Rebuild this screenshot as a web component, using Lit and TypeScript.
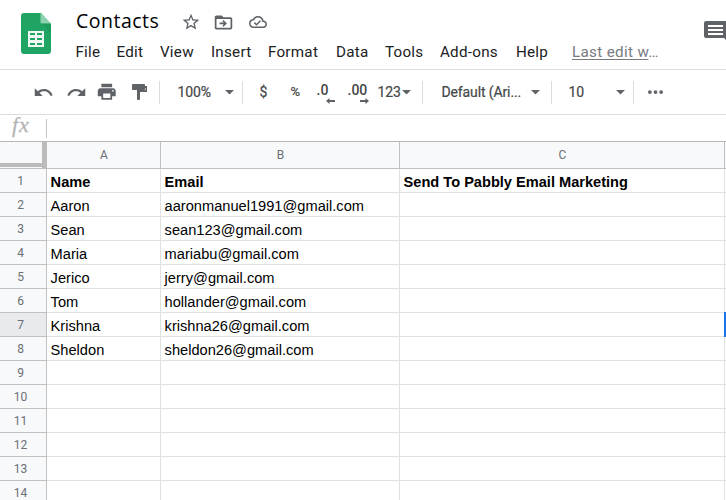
import { LitElement, html, css, svg } from "lit";
import { customElement } from "lit/decorators.js";

const menus = ["File", "Edit", "View", "Insert", "Format", "Data", "Tools", "Add-ons", "Help"];

const rows: string[][] = [
  ["Name", "Email", "Send To Pabbly Email Marketing"],
  ["Aaron", "aaronmanuel1991@gmail.com", ""],
  ["Sean", "sean123@gmail.com", ""],
  ["Maria", "mariabu@gmail.com", ""],
  ["Jerico", "jerry@gmail.com", ""],
  ["Tom", "hollander@gmail.com", ""],
  ["Krishna", "krishna26@gmail.com", ""],
  ["Sheldon", "sheldon26@gmail.com", ""],
  ...Array.from({ length: 6 }, () => ["", "", ""]),
];

const glyphs = {
  star: svg`<path d="M22 9.24l-7.19-.62L12 2 9.19 8.63 2 9.24l5.46 4.73L5.82 21 12 17.27 18.18 21l-1.63-7.03L22 9.24zM12 15.4l-3.76 2.27 1-4.28-3.32-2.88 4.38-.38L12 6.1l1.71 4.04 4.38.38-3.32 2.88 1 4.28L12 15.4z"/>`,
  move: svg`<path d="M20 6h-8l-2-2H4c-1.1 0-2 .9-2 2v12c0 1.1.9 2 2 2h16c1.1 0 2-.9 2-2V8c0-1.1-.9-2-2-2zm0 12H4V8h16v10zM12 9.2l-1.3 1.3 1.6 1.6H7.5v1.9h4.8l-1.6 1.6L12 16.9l3.9-3.85z"/>`,
  cloud: svg`<path d="M19.35 10.04A7.49 7.49 0 0 0 12 4C9.11 4 6.6 5.64 5.35 8.04A5.994 5.994 0 0 0 0 14c0 3.31 2.69 6 6 6h13c2.76 0 5-2.24 5-5 0-2.64-2.05-4.78-4.65-4.96zM19 18H6c-2.21 0-4-1.79-4-4 0-2.05 1.53-3.76 3.56-3.97l1.07-.11.5-.95A5.469 5.469 0 0 1 12 6c2.62 0 4.88 1.86 5.39 4.43l.3 1.5 1.53.11A2.98 2.98 0 0 1 22 15c0 1.65-1.35 3-3 3zm-9-3.82l-2.09-2.09L6.5 13.5 10 17l6.01-6.01-1.41-1.41z"/>`,
  undo: svg`<path d="M12.5 8c-2.65 0-5.05.99-6.9 2.6L2 7v9h9l-3.62-3.62c1.39-1.16 3.16-1.88 5.12-1.88 3.54 0 6.55 2.31 7.6 5.5l2.37-.78C21.08 11.03 17.15 8 12.5 8z"/>`,
  redo: svg`<path d="M18.4 10.6C16.55 8.99 14.15 8 11.5 8c-4.65 0-8.58 3.03-9.96 7.22L3.9 16c1.05-3.19 4.05-5.5 7.6-5.5 1.95 0 3.73.72 5.12 1.88L13 16h9V7l-3.6 3.6z"/>`,
  print: svg`<path d="M19 8H5c-1.66 0-3 1.34-3 3v6h4v4h12v-4h4v-6c0-1.66-1.34-3-3-3zm-3 11H8v-5h8v5zm3-7c-.55 0-1-.45-1-1s.45-1 1-1 1 .45 1 1-.45 1-1 1zm-1-9H6v4h12V3z"/>`,
};

const icon = (shape: unknown, cls: string) =>
  html`<svg class="icon ${cls}" viewBox="0 0 24 24" aria-hidden="true">${shape}</svg>`;

const arrow = html`<svg class="arrow" viewBox="0 0 10 5"><path d="M0 0h10L5 5z"/></svg>`;

@customElement("sheet-header")
class SheetHeader extends LitElement {
  static styles = css`
    :host { display: flex; height: 69px; border-bottom: 1px solid #dadce0; background: #fff; color: #202124; font-family: Roboto, sans-serif; }
    .logo { width: 30px; height: 41px; margin: 13px 0 0 21px; flex: none; }
    .main { margin-left: 25px; flex: 1; min-width: 0; }
    .titlebar { display: flex; align-items: center; height: 42px; }
    .title { width: 105px; font: 19.500px/26px "Open Sans", sans-serif; letter-spacing: .5px; color: #000; }
    .icon { fill: #5f6368; flex: none; }
    .star { width: 20px; height: 20px; margin-top: 2px; }
    .move { width: 21px; height: 21px; margin: 2px 0 0 12px; }
    .cloud { width: 18px; height: 18px; margin: 2px 0 0 15px; }
    .menu { display: grid; grid-template-columns: 41px 43.500px 51px 57px 68px 49px 55px 76px 56px 90px; font-size: 15.200px; line-height: 20px; letter-spacing: .27px; margin-left: -.6px; white-space: nowrap; }
    .edited { color: #777b80; letter-spacing: .35px; }
    .edited u { text-underline-offset: 2px; }
    .comments { width: 22px; height: 22px; margin: 21px 0 0; fill: #5f6368; flex: none; overflow: hidden; }
  `;
  render() {
    return html`
      <svg class="logo" viewBox="0 0 30 41">
        <path fill="#1fa463" d="M3 0h17l10 11v27a3 3 0 0 1-3 3H3a3 3 0 0 1-3-3V3a3 3 0 0 1 3-3z"/>
        <path fill="#8fd2b1" d="M19.5 0L30 10.5H21a1.5 1.5 0 0 1-1.5-1.5z"/>
        <path fill="#188f52" opacity=".45" d="M21 10.5h9V20z"/>
        <path fill="#f1f8f4" fill-rule="evenodd" d="M7 18h16v16H7zM9 20v2h5v-2zm7 0v2h5v-2zM9 25v2h5v-2zm7 0v2h5v-2zM9 30v2h5v-2zm7 0v2h5v-2z"/>
      </svg>
      <div class="main">
        <div class="titlebar">
          <span class="title">Contacts</span>
          ${icon(glyphs.star, "star")}${icon(glyphs.move, "move")}${icon(glyphs.cloud, "cloud")}
        </div>
        <nav class="menu">
          ${menus.map((m) => html`<span>${m}</span>`)}
          <span class="edited"><u>Last edit w</u>…</span>
        </nav>
      </div>
      <svg class="comments" viewBox="0 0 22 22">
        <path fill-rule="evenodd" d="M2 0h22v21l-4-4H2a2 2 0 0 1-2-2V2a2 2 0 0 1 2-2zM4 4v2h15V4zm0 4v2h15V8zm0 4v2h15v-2z"/>
      </svg>`;
  }
}

@customElement("sheet-toolbar")
class SheetToolbar extends LitElement {
  static styles = css`
    :host { display: flex; align-items: center; height: 44px; border-bottom: 1px solid #dadce0; box-sizing: content-box; background: #fff; color: #444746; font: 500 14px/20px Roboto, sans-serif; fill: #5f6368; }
    .icon { flex: none; }
    .undo { width: 21px; height: 21px; margin: 1px 0 0 33px; }
    .redo { width: 21px; height: 21px; margin: 1px 0 0 12px; }
    .print { width: 21.500px; height: 21.500px; margin-left: 9px; }
    .paint { width: 16px; height: 16px; margin-left: 14px; }
    .sep { width: 1px; height: 23px; background: #dadce0; flex: none; }
    .s1 { margin-left: 11px; }
    .arrow { width: 9px; height: 4.500px; flex: none; margin-top: 1px; }
    .label { font-weight: 400; white-space: nowrap; flex: none; -webkit-text-stroke: .2px; }
    .zoom { width: 47px; margin: -1px 0 0 18px; letter-spacing: -.1px; }
    .s2 { margin-left: 8px; }
    .dollar { width: 31px; margin-left: 17px; }
    .pct { width: 26px; font-size: 13px; }
    .dec { display: grid; justify-items: start; width: 31px; height: 23px; line-height: 19px; font-weight: 500; }
    .dec svg { width: 9px; height: 6px; margin: -2px 0 0 9px; }
    .dec.more { width: 30px; }
    .dec.more svg { margin-left: 12px; }
    .fmt { width: 24px; letter-spacing: -.1px; }
    .s3 { margin-left: 11px; }
    .font { width: 89px; margin-left: 19px; letter-spacing: -.12px; }
    .s4 { margin-left: 11px; }
    .size { width: 47px; margin: -1px 0 0 17px; }
    .s5 { margin-left: 8px; }
    .dots { width: 15px; height: 4px; margin: 0 0 0 14px; }
  `;
  render() {
    return html`
      ${icon(glyphs.undo, "undo")}${icon(glyphs.redo, "redo")}${icon(glyphs.print, "print")}
      <svg class="icon paint" viewBox="0 0 16 16"><path d="M1 0h11a1 1 0 0 1 1 1v1h2v6H8v7a1 1 0 0 1-1 1H6a1 1 0 0 1-1-1V6h8.500V4H13v1a1 1 0 0 1-1 1H1a1 1 0 0 1-1-1V1a1 1 0 0 1 1-1z"/></svg>
      <i class="sep s1"></i>
      <span class="label zoom">100%</span>${arrow}
      <i class="sep s2"></i>
      <span class="label dollar">$</span>
      <span class="label pct">%</span>
      <span class="dec">.0<svg viewBox="0 0 9 6"><path d="M0 3l3.500-3v2H9v2H3.500v2z"/></svg></span>
      <span class="dec more">.00<svg viewBox="0 0 9 6"><path d="M9 3L5.500 0v2H0v2h5.500v2z"/></svg></span>
      <span class="label fmt">123</span>${arrow}
      <i class="sep s3"></i>
      <span class="label font">Default (Ari...</span>${arrow}
      <i class="sep s4"></i>
      <span class="label size">10</span>${arrow}
      <i class="sep s5"></i>
      <svg class="icon dots" viewBox="0 0 16 4"><circle cx="2" cy="2" r="2"/><circle cx="8" cy="2" r="2"/><circle cx="14" cy="2" r="2"/></svg>`;
  }
}

@customElement("sheet-grid")
class SheetGrid extends LitElement {
  static styles = css`
    :host { display: block; }
    .row { display: grid; grid-template-columns: 47px 114px 239px 325px 1px; grid-template-rows: 100%; height: 24px; }
    .row > * { box-sizing: border-box; border-right: 1px solid #e0e1e2; border-bottom: 1px solid #e0e1e2; min-width: 0; }
    .cell { padding: 4px 0 0 3.600px; font: 14.630px/19px "Liberation Sans", Arial, sans-serif; color: #000; white-space: nowrap; }
    .bold .cell { font-weight: 700; font-size: 14.600px; }
    .row > .num, .row > .col { border-color: #c0c0c0; background: #f8f9fa; color: #6b6f74; font: 12px/21px Roboto, sans-serif; text-align: center; }
    .row > .num { padding: 2px 5px 0 0; }
    .row > .num.active { background: #e8eaed; }
    .row.head { height: 27px; }
    .row > .col { line-height: 26px; padding-left: 1px; }
    .row > .corner { background: #f8f9fa; border-right: 5px solid #bcbcbc; border-bottom: 1px solid #c0c0c0; display: flex; align-items: flex-end; }
    .freeze { width: 100%; height: 4px; background: #bcbcbc; margin-bottom: 1px; }
    .row > .next { background: #f8f9fa; border-right: 0; border-color: #c0c0c0; }
    .row > .edge { border-right: 0; }
    .row > .selected { width: 2px; margin: -1px 0 0 -1px; height: 25px; border: 0; background: #1a73e8; }
  `;
  render() {
    return html`
      <div class="row head">
        <div class="corner"><div class="freeze"></div></div>
        ${["A", "B", "C"].map((c) => html`<div class="col">${c}</div>`)}
        <div class="next"></div>
      </div>
      ${rows.map(
        (r, i) => html`<div class="row ${i === 0 ? "bold" : ""}">
          <div class="num ${i === 6 ? "active" : ""}">${i + 1}</div>
          ${r.map((v) => html`<div class="cell">${v}</div>`)}
          <div class="${i === 6 ? "selected" : "edge"}"></div>
        </div>`
      )}`;
  }
}

@customElement("app-root")
class AppRoot extends LitElement {
  static styles = css`
    :host { display: block; width: 726px; height: 500px; overflow: hidden; background: #fff; }
    .formula { display: flex; align-items: center; height: 26px; border-bottom: 1px solid #b8b8b8; }
    .fx { width: 34px; margin-left: 12px; font: italic 22px/22px "Liberation Serif", serif; color: #b5b5b5; margin-top: -7px; letter-spacing: 1px; -webkit-text-stroke: .3px; }
    .bar { width: 1px; height: 19px; background: #c4c4c4; }
  `;
  render() {
    return html`
      <sheet-header></sheet-header>
      <sheet-toolbar></sheet-toolbar>
      <div class="formula"><span class="fx">fx</span><i class="bar"></i></div>
      <sheet-grid></sheet-grid>`;
  }
}
